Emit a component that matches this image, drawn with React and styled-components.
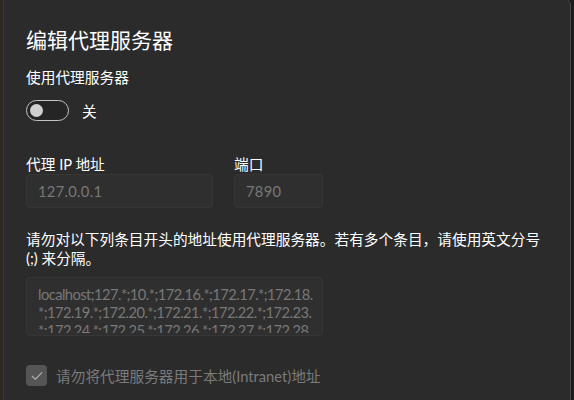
import React from "react";
import styled, { createGlobalStyle } from "styled-components";

const Global = createGlobalStyle`
  html, body {
    margin: 0;
    padding: 0;
    background: #1c1c1c;
    overflow: hidden;
  }
  body {
    font-family: "Lato", "Noto Sans CJK SC", sans-serif;
    -webkit-font-smoothing: antialiased;
  }
`

const Desktop = styled.div`
  display: flex;
  height: 400px;
  overflow: hidden;
`

const Edge = styled.div`
  flex: 0 0 ${(props) => props.w}px;
  background: ${(props) => props.tone};
`

const Dialog = styled.section`
  flex: 0 0 568px;
  box-sizing: border-box;
  margin-top: -2px;
  height: 410px;
  padding: 28px 0 0 22px;
  background: #2b2b2b;
  border-left: 1px solid #3a3632;
  border-right: 1px solid #4a4a4a;
  border-top-right-radius: 8px;
  color: #ffffff;
`

const Title = styled.h1`
  margin: 0;
  font-size: 21px;
  line-height: 28px;
  font-weight: 400;
`

const Sub = styled.div`
  margin-top: 13px;
  font-size: 14.7px;
  line-height: 20px;
`

const ToggleRow = styled.div`
  display: flex;
  align-items: center;
  gap: 13px;
  margin-top: 13px;
  font-size: 14.7px;
`

const Track = styled.div`
  box-sizing: border-box;
  width: 43px;
  height: 21px;
  border: 1px solid #c4c4c4;
  border-radius: 11px;
  background: rgba(0, 0, 0, 0.12);
  display: flex;
  align-items: center;
  padding-left: 3px;
`

const Knob = styled.div`
  width: 13px;
  height: 13px;
  border-radius: 50%;
  background: #d0d0d0;
`

const Fields = styled.div`
  display: flex;
  gap: 21px;
  margin-top: 33px;
`

const Field = styled.div`
  display: flex;
  flex-direction: column;
  width: ${(props) => props.w}px;
`

const Label = styled.label`
  font-size: 14.7px;
  line-height: 20px;
`

const Box = styled.div`
  box-sizing: border-box;
  height: 34px;
  padding: 0 11px;
  display: flex;
  align-items: center;
  background: #2f2f2f;
  border: 1px solid #363636;
  border-radius: 4px;
  color: #787878;
  font-size: 14.7px;
  letter-spacing: 0.3px;
`

const Desc = styled.p`
  margin: 22px 0 0;
  width: 524px;
  font-size: 14.7px;
  line-height: 19px;
`

const Area = styled.div`
  box-sizing: border-box;
  width: 297px;
  height: 59px;
  margin-top: 9px;
  padding: 7px 4px 0 11px;
  background: #2f2f2f;
  border: 1px solid #363636;
  border-radius: 4px;
  color: #787878;
  font-size: 14.7px;
`

const Lines = styled.div`
  height: 48px;
  overflow: hidden;
`

const Line = styled.div`
  line-height: 18px;
  white-space: nowrap;
  letter-spacing: -0.55px;
`

const CheckRow = styled.div`
  display: flex;
  align-items: center;
  gap: 9px;
  margin-top: 29px;
  color: #7a7a7a;
  font-size: 14.7px;
`

const Check = styled.div`
  box-sizing: border-box;
  width: 21px;
  height: 21px;
  border-radius: 4px;
  background: #555555;
  display: flex;
  align-items: center;
  justify-content: center;
`

const lines = [
  "localhost;127.*;10.*;172.16.*;172.17.*;172.18.",
  "*;172.19.*;172.20.*;172.21.*;172.22.*;172.23.",
  "*;172.24.*;172.25.*;172.26.*;172.27.*;172.28.",
]

export default function App() {
  return (
    <>
      <Global />
      <Desktop>
        <Edge w={3} tone="#2e2822" />
        <Dialog>
          <Title>编辑代理服务器</Title>
          <Sub>使用代理服务器</Sub>
          <ToggleRow>
            <Track>
              <Knob />
            </Track>
            <span>关</span>
          </ToggleRow>

          <Fields>
            <Field w={187}>
              <Label>代理 IP 地址</Label>
              <Box>127.0.0.1</Box>
            </Field>
            <Field w={89}>
              <Label>端口</Label>
              <Box>7890</Box>
            </Field>
          </Fields>

          <Desc>
            请勿对以下列条目开头的地址使用代理服务器。若有多个条目，请使用英文分号 (;) 来分隔。
          </Desc>
          <Area>
            <Lines>
              {lines.map((l) => (
                <Line key={l}>{l}</Line>
              ))}
            </Lines>
          </Area>

          <CheckRow>
            <Check>
              <svg width="12" height="10" viewBox="0 0 12 10" fill="none">
                <path d="M1.2 5.2 L4.3 8.2 L10.8 1.6" stroke="#a8a8a8" strokeWidth="1.3" strokeLinecap="round" strokeLinejoin="round" />
              </svg>
            </Check>
            <span>请勿将代理服务器用于本地(Intranet)地址</span>
          </CheckRow>
        </Dialog>
        <Edge w={3} tone="#1c1c1c" />
      </Desktop>
    </>
  )
}
